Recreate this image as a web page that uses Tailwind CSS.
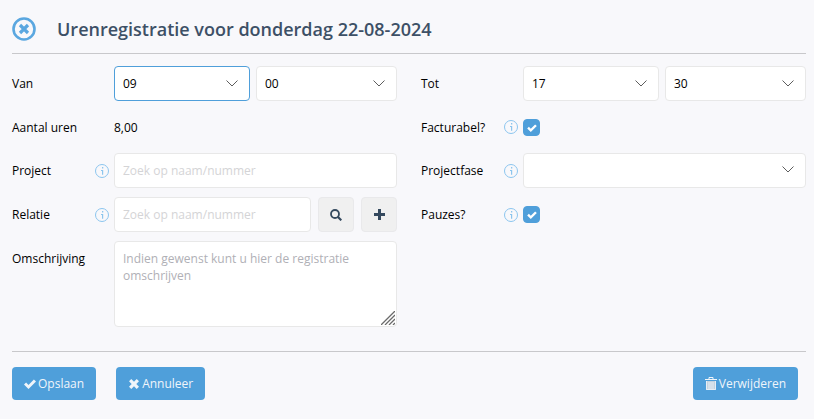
<!DOCTYPE html>
<html lang="nl">
<head>
  <meta charset="UTF-8">
  <meta name="viewport" content="width=device-width, initial-scale=1.0">
  <title>Urenregistratie</title>
  <script src="https://cdn.jsdelivr.net/npm/@tailwindcss/browser@4"></script>
</head>
<body class="bg-[#f8f8fb] font-['Open_Sans',sans-serif] text-[12px] leading-[17px] font-medium text-black min-h-screen">

  <!-- Icons -->
  <svg class="hidden" aria-hidden="true">
    <symbol id="info" viewBox="0 0 14 14">
      <circle cx="7" cy="7" r="6.5" fill="none" stroke="#8cc5ee"/>
      <path d="M7 3h1.300v1.400H7zM6 6h2.200v4.800H7V7H6z" fill="#8cc5ee"/>
    </symbol>
    <symbol id="chevron" viewBox="0 0 12 7">
      <path d="M.5.5 6 6 11.5.5" fill="none" stroke="#333" stroke-width=".8"/>
    </symbol>
    <symbol id="check" viewBox="0 0 12 10">
      <path d="M0 5.6 2.1 3.5 4.5 5.9 9.9.5 12 2.6 4.5 10z" fill="currentColor"/>
    </symbol>
    <symbol id="cross" viewBox="0 0 10 10">
      <path d="M0 2.3 2.3 0 5 2.7 7.700 0 10 2.300 7.300 5 10 7.700 7.700 10 5 7.300 2.300 10 0 7.700 2.700 5z" fill="currentColor"/>
    </symbol>
  </svg>

  <form class="pt-[17px] pl-3 pr-2 pb-5">
    <!-- Title -->
    <header class="flex items-center gap-[21px] pb-3 border-b border-[#c8c8cb]">
      <button type="button" aria-label="Sluiten" class="text-[#5aa7e0]">
        <svg class="block size-6" viewBox="0 0 24 24">
          <circle cx="12" cy="12" r="10.500" fill="none" stroke="currentColor" stroke-width="2.600"/>
          <path d="m8 8 8 8m0-8-8 8" fill="none" stroke="currentColor" stroke-width="3.200"/>
        </svg>
      </button>
      <h1 class="text-[18px] leading-6 font-semibold text-[#3d5066]">Urenregistratie voor donderdag 22-08-2024</h1>
    </header>

    <div class="grid grid-cols-2 gap-6 pt-3 pb-6 border-b border-[#c8c8cb]">
      <!-- Left column -->
      <div class="flex flex-col gap-[9px]">
        <div class="flex items-center">
          <label for="van-uur" class="w-[102px] shrink-0">Van</label>
          <div class="grid grid-cols-[136fr_141fr] gap-[6px] flex-1">
            <div class="relative">
              <select id="van-uur" class="appearance-none w-full h-[35px] pl-2 pr-7 rounded border border-[#4f9fda] bg-white outline-none"><option>09</option></select>
              <svg class="absolute right-3 top-[14px] w-3 h-[7px] pointer-events-none"><use href="#chevron"/></svg>
            </div>
            <div class="relative">
              <select aria-label="Van minuten" class="appearance-none w-full h-[35px] pl-2 pr-7 rounded border border-[#e8e8e8] bg-white outline-none"><option>00</option></select>
              <svg class="absolute right-3 top-[14px] w-3 h-[7px] pointer-events-none"><use href="#chevron"/></svg>
            </div>
          </div>
        </div>
        <div class="flex items-center h-[34px]">
          <span class="w-[102px] shrink-0">Aantal uren</span>
          <output>8,00</output>
        </div>
        <div class="flex items-center">
          <div class="w-[102px] shrink-0 flex items-center justify-between pr-[5px]">
            <label for="project">Project</label>
            <svg class="size-[14px]"><use href="#info"/></svg>
          </div>
          <input id="project" type="text" placeholder="Zoek op naam/nummer" class="flex-1 min-w-0 h-[35px] px-2 rounded border border-[#e8e8e8] bg-white font-normal placeholder:text-[#d4d4d6] outline-none">
        </div>
        <div class="flex items-center">
          <div class="w-[102px] shrink-0 flex items-center justify-between pr-[5px]">
            <label for="relatie">Relatie</label>
            <svg class="size-[14px]"><use href="#info"/></svg>
          </div>
          <div class="flex-1 min-w-0 flex gap-[7px]">
            <input id="relatie" type="text" placeholder="Zoek op naam/nummer" class="flex-1 min-w-0 h-[35px] px-2 rounded border border-[#e8e8e8] bg-white font-normal placeholder:text-[#d4d4d6] outline-none">
            <button type="button" aria-label="Zoeken" class="flex items-center justify-center w-9 h-[35px] rounded border border-[#e9e9eb] bg-[#f0f0f0] text-[#34495e]">
              <svg class="size-3" viewBox="0 0 12 12" fill="none" stroke="currentColor">
                <circle cx="5" cy="5" r="4" stroke-width="1.800"/>
                <path d="m8 8 3.300 3.300" stroke-width="2.200"/>
              </svg>
            </button>
            <button type="button" aria-label="Toevoegen" class="flex items-center justify-center w-9 h-[35px] rounded border border-[#e9e9eb] bg-[#f0f0f0] text-[#34495e]">
              <svg class="size-[11px]" viewBox="0 0 11 11"><path d="M4 0h3v4h4v3H7v4H4V7H0V4h4z" fill="currentColor"/></svg>
            </button>
          </div>
        </div>
        <div class="flex items-start">
          <label for="omschrijving" class="w-[102px] shrink-0 pt-[9px]">Omschrijving</label>
          <div class="relative flex-1 min-w-0">
            <textarea id="omschrijving" placeholder="Indien gewenst kunt u hier de registratie omschrijven" class="block w-full h-[86px] px-2 py-2 rounded border border-[#e8e8e8] bg-white font-normal placeholder:text-[#b0b0b6] resize-none outline-none"></textarea>
            <svg class="absolute right-[2px] bottom-[2px] size-[14px] pointer-events-none" viewBox="0 0 14 14" fill="none" stroke="#6b6b6b" stroke-width="1.300"><path d="M0 14 14 0M4 14 14 4M8 14l6-6M12 14l2-2"/></svg>
          </div>
        </div>
      </div>

      <!-- Right column -->
      <div class="flex flex-col gap-[9px]">
        <div class="flex items-center">
          <label for="tot-uur" class="w-[102px] shrink-0">Tot</label>
          <div class="grid grid-cols-[136fr_141fr] gap-[6px] flex-1">
            <div class="relative">
              <select id="tot-uur" class="appearance-none w-full h-[35px] pl-2 pr-7 rounded border border-[#e8e8e8] bg-white outline-none"><option>17</option></select>
              <svg class="absolute right-3 top-[14px] w-3 h-[7px] pointer-events-none"><use href="#chevron"/></svg>
            </div>
            <div class="relative">
              <select aria-label="Tot minuten" class="appearance-none w-full h-[35px] pl-2 pr-7 rounded border border-[#e8e8e8] bg-white outline-none"><option>30</option></select>
              <svg class="absolute right-3 top-[14px] w-3 h-[7px] pointer-events-none"><use href="#chevron"/></svg>
            </div>
          </div>
        </div>
        <div class="flex items-center h-[34px]">
          <div class="w-[102px] shrink-0 flex items-center justify-between pr-[5px]">
            <label for="facturabel">Facturabel?</label>
            <svg class="size-[14px]"><use href="#info"/></svg>
          </div>
          <div class="relative flex size-[17px]">
            <input id="facturabel" type="checkbox" checked class="peer appearance-none size-[17px] rounded border border-[#4f9fda] bg-white checked:bg-[#4f9fda]">
            <svg class="absolute left-1 top-[5px] w-[10px] h-2 text-white pointer-events-none hidden peer-checked:block"><use href="#check"/></svg>
          </div>
        </div>
        <div class="flex items-center">
          <div class="w-[102px] shrink-0 flex items-center justify-between pr-[5px]">
            <label for="projectfase">Projectfase</label>
            <svg class="size-[14px]"><use href="#info"/></svg>
          </div>
          <div class="relative flex-1">
            <select id="projectfase" class="appearance-none block w-full h-[35px] pl-2 pr-7 rounded border border-[#e8e8e8] bg-white outline-none"><option></option></select>
            <svg class="absolute right-3 top-[13px] w-3 h-[7px] pointer-events-none"><use href="#chevron"/></svg>
          </div>
        </div>
        <div class="flex items-center h-[35px]">
          <div class="w-[102px] shrink-0 flex items-center justify-between pr-[5px]">
            <label for="pauzes">Pauzes?</label>
            <svg class="size-[14px]"><use href="#info"/></svg>
          </div>
          <div class="relative flex size-[17px]">
            <input id="pauzes" type="checkbox" checked class="peer appearance-none size-[17px] rounded border border-[#4f9fda] bg-white checked:bg-[#4f9fda]">
            <svg class="absolute left-1 top-[5px] w-[10px] h-2 text-white pointer-events-none hidden peer-checked:block"><use href="#check"/></svg>
          </div>
        </div>
      </div>
    </div>

    <!-- Actions -->
    <div class="flex gap-5 pt-[15px] pr-2 text-[#f0f5fa]">
      <button type="submit" class="flex items-center gap-[2px] h-[33px] px-3 rounded bg-[#4f9fda]">
        <svg class="w-3 h-[10px]"><use href="#check"/></svg>Opslaan
      </button>
      <button type="button" class="flex items-center gap-[2px] h-[33px] px-3 rounded bg-[#4f9fda]">
        <svg class="w-3 h-[10px]"><use href="#cross"/></svg>Annuleer
      </button>
      <button type="button" class="ml-auto flex items-center gap-[2px] h-[33px] px-3 rounded bg-[#4f9fda]">
        <svg class="w-3 h-[13px]" viewBox="0 0 12 13">
          <path d="M4 2V.5h4V2M0 2.500h12" fill="none" stroke="currentColor"/>
          <path d="M1 4h10v9H1z" fill="#c3d3e0"/>
          <path d="M1.500 4v8.500h9V4M4 5v7M6 5v7M8 5v7" fill="none" stroke="currentColor" stroke-width=".8"/>
        </svg>Verwijderen
      </button>
    </div>
  </form>
</body>
</html>
